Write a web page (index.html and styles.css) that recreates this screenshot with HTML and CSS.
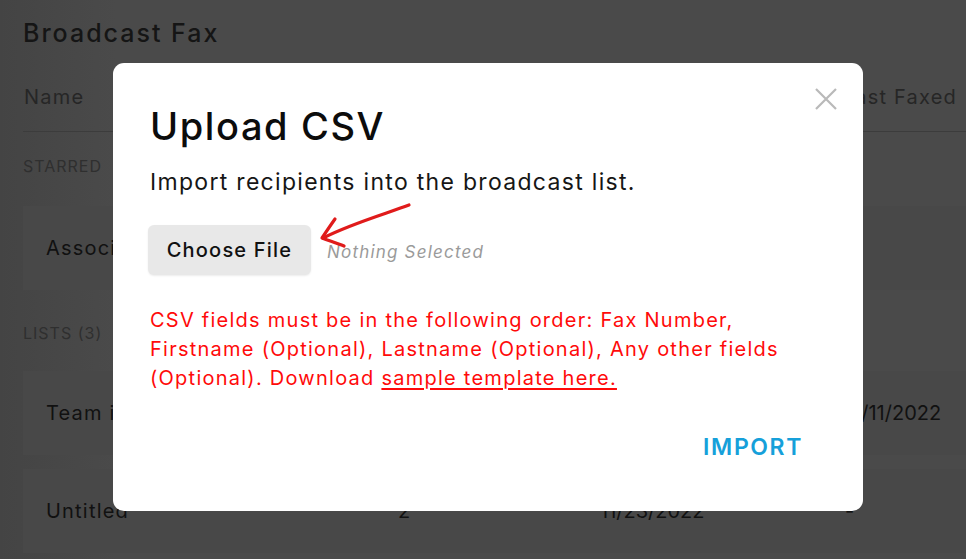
FILE: index.html
```html
<!DOCTYPE html>
<html>
<head>
<meta charset="utf-8">
<link rel="stylesheet" href="styles.css">
</head>
<body>
<div class="page">
  <h1 class="page-title">Broadcast Fax</h1>
  <div class="table-head">
    <span class="col-name">Name</span>
    <span class="col-last">Last Faxed</span>
  </div>
  <div class="section-label">STARRED</div>
  <div class="row"><span class="col-name">Associates</span></div>
  <div class="section-label lists">LISTS (3)</div>
  <div class="row"><span class="col-name">Team internal</span><span class="col-count"></span><span class="col-date"></span><span class="col-last">11/11/2022</span></div>
  <div class="row"><span class="col-name">Untitled</span><span class="col-count">2</span><span class="col-date">11/23/2022</span><span class="col-last">-</span></div>
</div>
<div class="modal">
  <button class="close" aria-label="Close">
    <svg width="22" height="22" viewBox="0 0 22 22"><path d="M1 1 L21 21 M21 1 L1 21" stroke="#b9b9b9" stroke-width="2.2" fill="none"/></svg>
  </button>
  <h2 class="modal-title">Upload CSV</h2>
  <p class="modal-sub">Import recipients into the broadcast list.</p>
  <div class="file-row">
    <button class="choose">Choose File</button>
    <span class="nothing">Nothing Selected</span>
  </div>
  <p class="note">CSV fields must be in the following order: Fax Number, Firstname (Optional), Lastname (Optional), Any other fields (Optional). Download <a href="#">sample template here.</a></p>
  <div class="actions"><button class="import">IMPORT</button></div>
</div>
<svg class="arrow" width="966" height="559" viewBox="0 0 966 559">
  <path d="M409 205 C 385 214, 350 224, 323 238" stroke="#e01b1b" stroke-width="3.2" fill="none" stroke-linecap="round"/>
  <path d="M335 219 C 330 226, 326 232, 322 238 C 330 241, 337 243, 344 246" stroke="#e01b1b" stroke-width="3.2" fill="none" stroke-linecap="round" stroke-linejoin="round"/>
</svg>
</body>
</html>
```
FILE: styles.css
```css
* { box-sizing: border-box; }
html, body { margin: 0; padding: 0; }
body {
  width: 966px;
  height: 559px;
  overflow: hidden;
  background: linear-gradient(90deg, #444 0%, #4a4a4a 12%, #4a4a4a 100%);
  font-family: Inter, "Noto Sans", sans-serif;
  color: #111;
  position: relative;
}
.page { padding: 16px 0 0 23px; }
.page-title {
  margin: 0;
  font-size: 25px;
  line-height: 34px;
  font-weight: 500;
  color: #151515;
  letter-spacing: 2px;
}
.table-head {
  display: flex;
  align-items: center;
  justify-content: space-between;
  height: 82px;
  padding: 12px 9px 0 1px;
  border-bottom: 1.5px solid #3c3c3c;
  font-size: 20px;
  color: #262626;
  letter-spacing: 1.2px;
}
.section-label {
  font-size: 16px;
  color: #2f2f2f;
  height: 74px;
  padding-top: 24px;
  letter-spacing: 1px;
}
.section-label.lists { height: 81px; padding-top: 33px; }
.row {
  display: flex;
  align-items: center;
  height: 84px;
  padding-left: 23px;
  font-size: 20px;
  color: #111;
  background: #484848;
  letter-spacing: 1.2px;
}
.row + .row { margin-top: 14px; }
.row .col-name { width: 352px; }
.row .col-count { width: 202px; }
.row .col-date { width: 245px; letter-spacing: 0; }
.row .col-last { letter-spacing: 0; }
.modal {
  position: absolute;
  left: 113px;
  top: 63px;
  width: 750px;
  height: 448px;
  background: #fff;
  border-radius: 11px;
  padding: 40px 37px 0 37px;
}
.close {
  position: absolute;
  right: 26px;
  top: 25px;
  padding: 0;
  border: 0;
  background: none;
  width: 22px;
  height: 22px;
}
.modal-title {
  margin: 0;
  font-size: 38px;
  font-weight: 500;
  color: #0c0c0c;
  line-height: 46px;
  letter-spacing: 1.6px;
}
.modal-sub {
  margin: 18px 0 0;
  font-size: 23px;
  line-height: 30px;
  color: #161616;
  letter-spacing: 1.3px;
}
.file-row {
  display: flex;
  align-items: center;
  margin-top: 28px;
}
.choose {
  margin-left: -2px;
  width: 163px;
  height: 50px;
  border: 0;
  border-radius: 6px;
  background: #e8e8e8;
  box-shadow: 0 1px 2px rgba(0,0,0,0.08);
  font-family: inherit;
  font-size: 20px;
  font-weight: 500;
  color: #111;
  letter-spacing: 1.2px;
}
.nothing {
  margin-left: 16px;
  margin-top: 3px;
  font-size: 17px;
  font-style: italic;
  color: #9a9a9a;
  letter-spacing: 1.2px;
}
.note {
  margin: 31px 0 0;
  width: 650px;
  font-size: 20px;
  line-height: 29px;
  color: #ff0a0a;
  letter-spacing: 1.25px;
}
.note a { color: #ff0a0a; text-decoration: underline; text-underline-offset: 3px; }
.actions {
  display: flex;
  justify-content: flex-end;
  margin-top: 40px;
  padding-right: 23px;
}
.import {
  border: 0;
  background: none;
  padding: 0;
  font-family: inherit;
  font-size: 23px;
  font-weight: 600;
  color: #16a0da;
  letter-spacing: 1.6px;
}
.arrow { position: absolute; left: 0; top: 0; pointer-events: none; }
```
